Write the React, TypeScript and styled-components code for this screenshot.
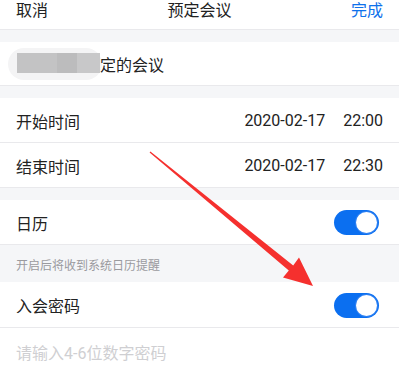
import React from 'react';
import styled, { createGlobalStyle } from 'styled-components';

const GlobalStyle = createGlobalStyle`
  html, body {
    margin: 0;
    padding: 0;
    background: #ffffff;
  }
  body {
    font-family: Roboto, "Noto Sans CJK SC", sans-serif;
    color: #222222;
  }
`;

const Page = styled.div`
  position: relative;
  width: 399px;
  height: 371px;
  overflow: hidden;
  background: #f5f6f8;
  display: flex;
  flex-direction: column;
  & > * {
    flex-shrink: 0;
  }
`;

const Header = styled.div`
  height: 29px;
  background: #ffffff;
  border-bottom: 1px solid #e9e9ec;
  display: flex;
  justify-content: space-between;
  align-items: flex-start;
  padding: 0 16px;
  font-size: 16px;
  line-height: 22px;
`;

const HeaderLink = styled.span<{ $primary?: boolean }>`
  color: ${p => (p.$primary ? '#0e71eb' : '#222222')};
`;

const Gap = styled.div<{ $h: number }>`
  height: ${p => p.$h}px;
`;

const Row = styled.div<{ $h: number; $pl?: number; $last?: boolean }>`
  height: ${p => p.$h}px;
  background: #ffffff;
  border-bottom: ${p => (p.$last ? 'none' : '1px solid #e9e9ec')};
  display: flex;
  align-items: center;
  justify-content: space-between;
  padding: 1px 20px 0 ${p => p.$pl ?? 16}px;
  box-sizing: border-box;
  font-size: 16px;
`;

const Label = styled.span`
  color: #222222;
`;

const Value = styled.span`
  display: flex;
  gap: 18px;
  margin-right: -4px;
  color: #222222;
  font-size: 16px;
`;

const Subject = styled.div`
  display: flex;
  align-items: center;
`;

const Redact = styled.span`
  display: inline-flex;
  padding: 5px 2px 7px 9px;
  border-radius: 16px;
  background: #f4f4f5;
`;

const RedactBlock = styled.span<{ $w: number; $c: string }>`
  width: ${p => p.$w}px;
  height: 20px;
  background: ${p => p.$c};
`;

const SubjectText = styled.span`
  margin-left: -2px;
`;

const Toggle = styled.span`
  width: 45px;
  height: 25px;
  border-radius: 13px;
  background: #0b6ff0;
  display: flex;
  align-items: center;
  justify-content: flex-end;
  padding-right: 2px;
  box-sizing: border-box;
`;

const Knob = styled.span`
  width: 21px;
  height: 21px;
  border-radius: 50%;
  background: #ffffff;
  box-shadow: 0 0 0 1px #2b7ff2;
`;

const Caption = styled.div`
  height: 37px;
  display: flex;
  align-items: center;
  padding: 1px 0 0 16px;
  box-sizing: border-box;
  font-size: 12px;
  color: #9a9a9e;
`;

const Placeholder = styled.span`
  color: #cfcfd2;
`;

const Arrow = styled.svg`
  position: absolute;
  left: 0;
  top: 0;
  pointer-events: none;
`;

export default function App() {
  return (
    <>
      <GlobalStyle />
      <Page>
        <Header>
          <HeaderLink>取消</HeaderLink>
          <HeaderLink>预定会议</HeaderLink>
          <HeaderLink $primary>完成</HeaderLink>
        </Header>
        <Gap $h={12} />
        <Row $h={44} $pl={8}>
          <Subject>
            <Redact>
              <RedactBlock $w={40} $c="#c3c3c4" />
              <RedactBlock $w={20} $c="#bcbcbd" />
              <RedactBlock $w={23} $c="#c8c8c9" />
            </Redact>
            <SubjectText>定的会议</SubjectText>
          </Subject>
        </Row>
        <Gap $h={12} />
        <Row $h={45}>
          <Label>开始时间</Label>
          <Value>
            <span>2020-02-17</span>
            <span>22:00</span>
          </Value>
        </Row>
        <Row $h={45}>
          <Label>结束时间</Label>
          <Value>
            <span>2020-02-17</span>
            <span>22:30</span>
          </Value>
        </Row>
        <Gap $h={12} />
        <Row $h={45}>
          <Label>日历</Label>
          <Toggle>
            <Knob />
          </Toggle>
        </Row>
        <Caption>开启后将收到系统日历提醒</Caption>
        <Row $h={46}>
          <Label>入会密码</Label>
          <Toggle>
            <Knob />
          </Toggle>
        </Row>
        <Row $h={46} $last>
          <Placeholder>请输入4-6位数字密码</Placeholder>
        </Row>
        <Arrow width="399" height="371" viewBox="0 0 399 371">
          <polygon
            fill="#f5302e"
            points="149.6,152.5 150.4,151.5 293.2,265.5 299,257.5 313,286 283,277.5 288.8,270.5"
          />
        </Arrow>
      </Page>
    </>
  );
}
